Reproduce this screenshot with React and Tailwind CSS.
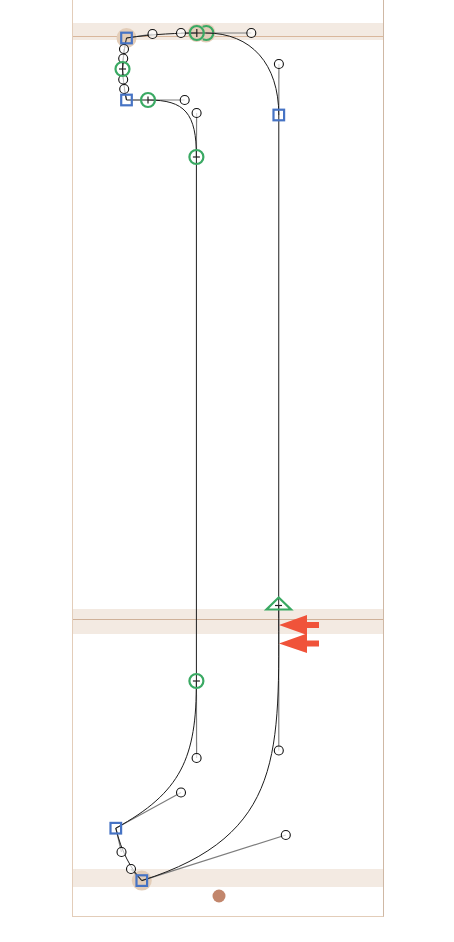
import React from "react";

const GREEN = "#3aa963";
const BLUE = "#4673c4";
const HALO = "#e3cdb8";

// off-curve handles: [x, y, anchor x, anchor y]
const handles = [
  [152.5, 34, 126.5, 38],
  [181, 33, 197, 33],
  [251.3, 33, 206, 33],
  [278.9, 64, 278.8, 115],
  [124, 49, 122.5, 69],
  [123.2, 58.5, 122.5, 69],
  [123.2, 79.5, 122.5, 69],
  [124.2, 89, 126.5, 100],
  [184.7, 100, 148, 100],
  [196.6, 113, 196.4, 157],
  [196.6, 758, 196.4, 681],
  [181, 792.5, 115.8, 828.2],
  [121.5, 852, 115.8, 828.2],
  [131, 869, 141.8, 880.6],
  [278.8, 750.5, 278.7, 605],
  [285.8, 835, 141.8, 880.6],
];

const squares = [
  [126.5, 38],
  [126.5, 100],
  [278.8, 115],
  [115.8, 828.2],
  [141.8, 880.6],
];

// smooth nodes with the little tick across them
const circles = [
  [122.5, 69, "h"],
  [148, 100, "v"],
  [196.4, 157, "h"],
  [196.4, 681, "h"],
];

const outline =
  "M126.5 38 C152.5 34 181 33 197 33 L206 33 C251.3 33 278.8 64 278.8 115 L278.7 605 C278.8 750.5 285.8 835 141.8 880.6 C131 869 121.5 852 115.8 828.2 C181 792.5 196.6 758 196.4 681 L196.4 157 C196.6 113 184.7 100 148 100 L126.5 100 C124.2 89 123.2 79.5 122.5 69 C123.2 58.5 124 49 126.5 38 Z";

const Band = ({ className, children }) => (
  <div className={`w-full bg-[#f3eae2] ${className}`}>{children}</div>
);

const GlyphOverlay = () => (
  <svg
    className="absolute top-0 left-0"
    width="454"
    height="942"
    viewBox="0 0 454 942"
    fill="none"
  >
    <circle cx="126.5" cy="38" r="10" fill={HALO} />
    <circle cx="141.8" cy="880.6" r="10" fill={HALO} />
    <circle cx="206" cy="33" r="9.5" fill={HALO} />
    <circle cx="206.3" cy="33" r="7" stroke={GREEN} strokeWidth="2.2" />
    <circle cx="196.5" cy="33" r="9" fill={HALO} />
    {handles.map(([x, y, ax, ay]) => (
      <line
        key={`l-${x}-${y}`}
        x1={x}
        y1={y}
        x2={ax}
        y2={ay}
        stroke="#7d7d7d"
        strokeWidth="1.2"
      />
    ))}
    <path d={outline} stroke="#1c1c1c" strokeWidth="1" />
    {handles.map(([x, y]) => (
      <circle
        key={`h-${x}-${y}`}
        cx={x}
        cy={y}
        r="4.5"
        fill="#fff"
        fillOpacity="0.7"
        stroke="#111"
        strokeWidth="1.1"
      />
    ))}
    <circle cx="196.8" cy="33" r="7" stroke={GREEN} strokeWidth="2.2" />
    <line x1="196.8" y1="29" x2="196.8" y2="37" stroke="#222" strokeWidth="1.2" />
    {circles.map(([x, y, dir]) => (
      <g key={`c-${x}-${y}`}>
        <circle cx={x} cy={y} r="7" stroke={GREEN} strokeWidth="2.2" />
        {dir === "h" ? (
          <line x1={x - 3.5} y1={y} x2={x + 3.5} y2={y} stroke="#222" strokeWidth="1.2" />
        ) : (
          <line x1={x} y1={y - 3.5} x2={x} y2={y + 3.5} stroke="#222" strokeWidth="1.2" />
        )}
      </g>
    ))}
    {squares.map(([x, y]) => (
      <rect
        key={`s-${x}-${y}`}
        x={x - 5.3}
        y={y - 5.3}
        width="10.6"
        height="10.6"
        stroke={BLUE}
        strokeWidth="2.2"
      />
    ))}
    <path d="M278.7 597.5 L291 609.5 L266.5 609.5 Z" stroke={GREEN} strokeWidth="2.2" />
    <line x1="275" y1="605.5" x2="282" y2="605.5" stroke="#222" strokeWidth="1.2" />
    <path d="M279 625 L307 615 L307 622 L319 622 L319 628 L307 628 L307 635 Z" fill="#f0533a" />
    <path d="M279 643.5 L307 633.5 L307 640.5 L319 640.5 L319 646.5 L307 646.5 L307 653 Z" fill="#f0533a" />
    <circle cx="219" cy="896" r="6.5" fill="#c2866c" />
  </svg>
);

export default function App() {
  return (
    <div className="relative w-[454px] h-[942px] bg-white overflow-hidden">
      <div className="ml-[72px] w-[312px] h-[917px] pt-[23px] border-x border-b border-l-[#e3cdb9] border-r-[#cfb8a4] border-b-[#e3cdb9] box-border">
        <Band className="h-[17px] pt-[13px]">
          <div className="h-px bg-[#d9b79c]" />
        </Band>
        <Band className="h-[25px] mt-[569px] pt-[10px]">
          <div className="h-px bg-[#cfb199]" />
        </Band>
        <Band className="h-[18px] mt-[235px]" />
      </div>
      <GlyphOverlay />
    </div>
  );
}
